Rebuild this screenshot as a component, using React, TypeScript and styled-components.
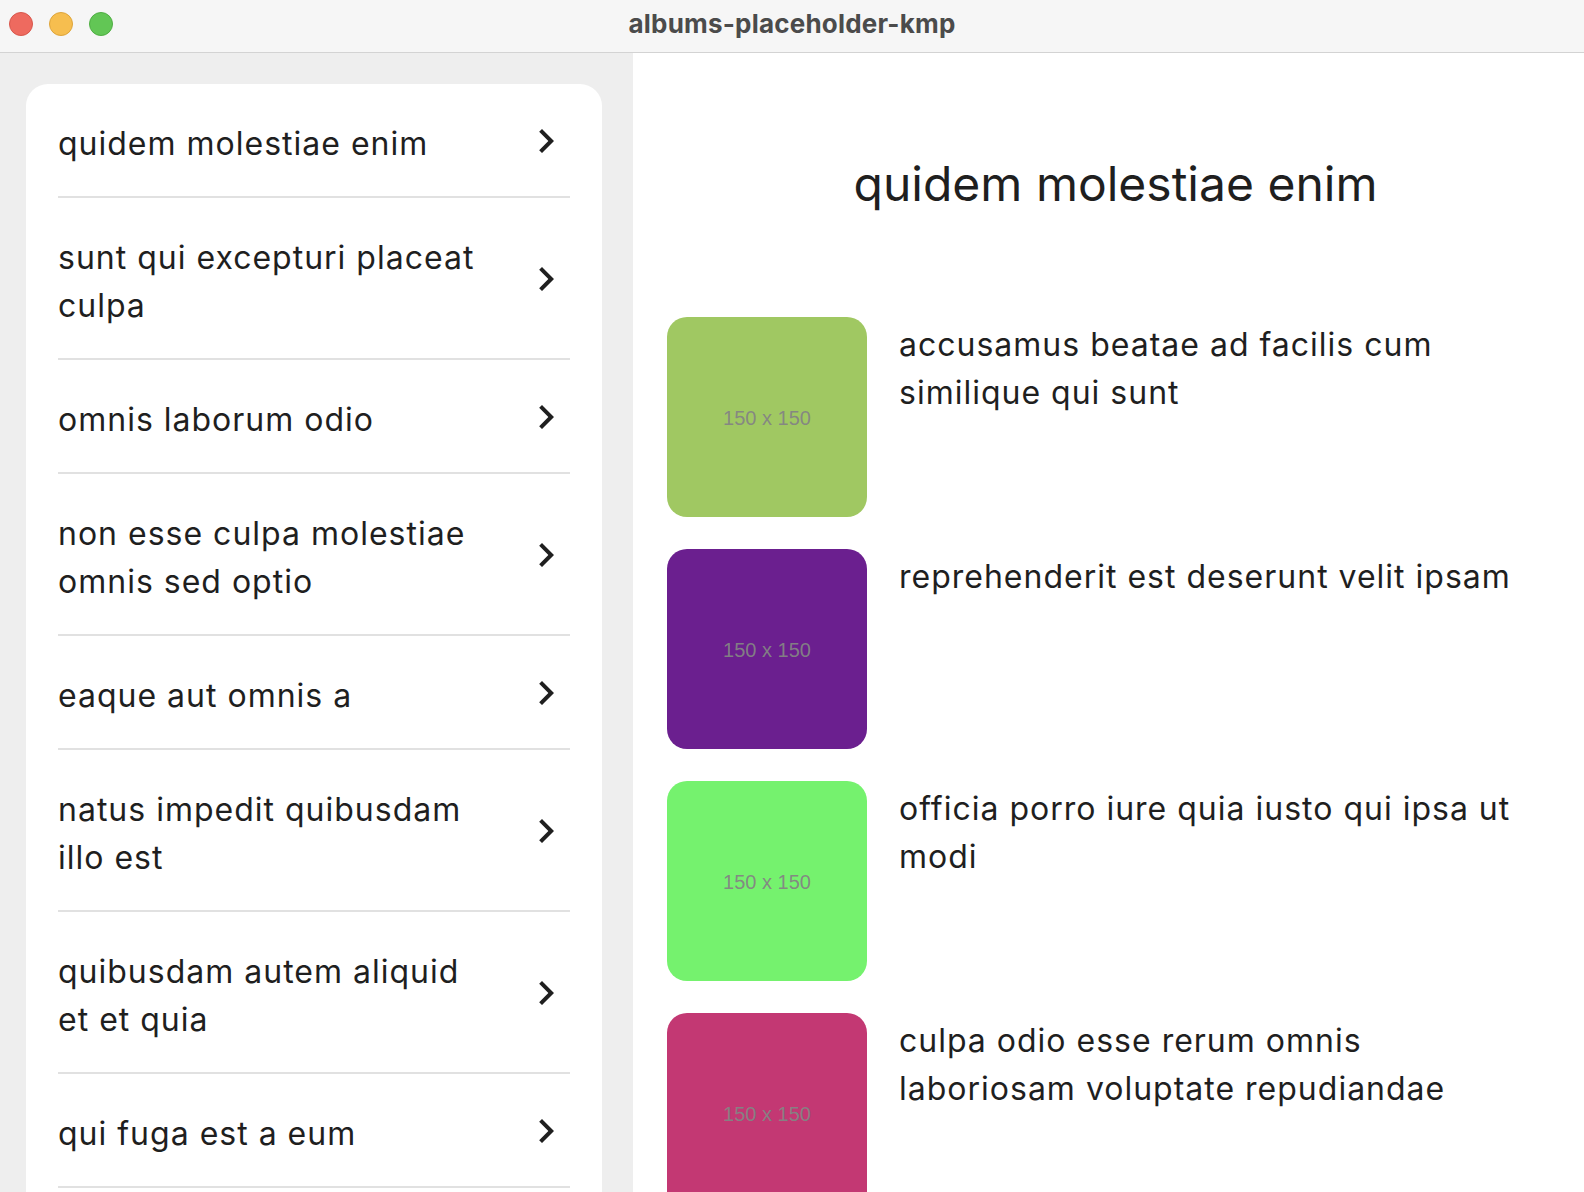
import styled, { createGlobalStyle } from 'styled-components';

const GlobalStyle = createGlobalStyle`
  html, body {
    margin: 0;
    padding: 0;
    height: 100%;
    overflow: hidden;
  }
  body {
    font-family: Inter, "Noto Sans", "DejaVu Sans", sans-serif;
    color: #1f1f1f;
  }
  #root {
    height: 100%;
  }
`;

const Window = styled.div`
  height: 100vh;
  display: flex;
  flex-direction: column;
  background: #ffffff;
`;

const TitleBar = styled.div`
  height: 53px;
  box-sizing: border-box;
  flex-shrink: 0;
  display: grid;
  grid-template-columns: 1fr auto 1fr;
  align-items: center;
  padding-bottom: 5px;
  background: #f6f6f6;
  border-bottom: 1px solid #d3d3d3;
`;

const Lights = styled.div`
  display: flex;
  gap: 16px;
  padding-left: 9px;
  padding-top: 1px;
`;

const Light = styled.span<{ $fill: string; $edge: string }>`
  width: 24px;
  height: 24px;
  border-radius: 50%;
  box-sizing: border-box;
  background: ${(p) => p.$fill};
  border: 1px solid ${(p) => p.$edge};
`;

const WindowTitle = styled.div`
  font-size: 26px;
  font-weight: 700;
  color: #4b4b4b;
  letter-spacing: 0.2px;
`;

const Body = styled.div`
  flex: 1;
  display: flex;
  min-height: 0;
`;

const Sidebar = styled.aside`
  width: 633px;
  flex-shrink: 0;
  box-sizing: border-box;
  background: #eeeeee;
  padding: 31px 31px 0 26px;
  overflow: hidden;
`;

const Card = styled.div`
  background: #ffffff;
  border-radius: 22px 22px 0 0;
  padding: 0 32px;
  min-height: 100%;
`;

const Item = styled.div`
  display: flex;
  align-items: center;
  padding: 36px 0 28px;
  border-bottom: 2px solid #e1e1e1;
`;

const ItemText = styled.div`
  flex: 1;
  padding-right: 32px;
  font-size: 32px;
  line-height: 48px;
  letter-spacing: 1px;
  color: #1f1f1f;
`;

const Chevron = styled.svg`
  width: 48px;
  height: 48px;
  flex-shrink: 0;
  margin-top: -6px;
  fill: #1f1f1f;
`;

const Main = styled.main`
  flex: 1;
  box-sizing: border-box;
  padding: 0 32px 0 34px;
  overflow: hidden;
`;

const Heading = styled.h1`
  margin: 99px 0 101px;
  padding-left: 12px;
  text-align: center;
  font-size: 48px;
  line-height: 64px;
  font-weight: 400;
  color: #1f1f1f;
`;

const AlbumRow = styled.div`
  display: flex;
  align-items: flex-start;
  gap: 32px;
  margin-bottom: 32px;
  padding-right: 24px;
`;

const Thumb = styled.div<{ $bg: string }>`
  width: 200px;
  height: 200px;
  flex-shrink: 0;
  border-radius: 20px;
  background: ${(p) => p.$bg};
  display: flex;
  align-items: center;
  justify-content: center;
  padding-top: 3px;
  box-sizing: border-box;
  font-family: "Liberation Sans", Arial, sans-serif;
  font-size: 20px;
  color: rgba(132, 132, 132, 0.95);
`;

const AlbumText = styled.div`
  flex: 1;
  padding-top: 4px;
  font-size: 32px;
  line-height: 48px;
  letter-spacing: 1px;
  color: #1f1f1f;
`;

const albums = [
  'quidem molestiae enim',
  'sunt qui excepturi placeat culpa',
  'omnis laborum odio',
  'non esse culpa molestiae omnis sed optio',
  'eaque aut omnis a',
  'natus impedit quibusdam illo est',
  'quibusdam autem aliquid et et quia',
  'qui fuga est a eum',
];

const photos = [
  { title: 'accusamus beatae ad facilis cum similique qui sunt', color: '#a0c862' },
  { title: 'reprehenderit est deserunt velit ipsam', color: '#6b1f8f' },
  { title: 'officia porro iure quia iusto qui ipsa ut modi', color: '#75f26e' },
  { title: 'culpa odio esse rerum omnis laboriosam voluptate repudiandae', color: '#c33873' },
];

function App() {
  return (
    <>
      <GlobalStyle />
      <Window>
        <TitleBar>
          <Lights>
            <Light $fill="#ee6a5f" $edge="#d8574c" />
            <Light $fill="#f6be4f" $edge="#dea53b" />
            <Light $fill="#62c655" $edge="#4fae43" />
          </Lights>
          <WindowTitle>albums-placeholder-kmp</WindowTitle>
          <div />
        </TitleBar>
        <Body>
          <Sidebar>
            <Card>
              {albums.map((a) => (
                <Item key={a}>
                  <ItemText>{a}</ItemText>
                  <Chevron viewBox="0 0 24 24">
                    <path d="M8.59 16.59L13.17 12 8.59 7.41 10 6l6 6-6 6-1.41-1.41z" />
                  </Chevron>
                </Item>
              ))}
            </Card>
          </Sidebar>
          <Main>
            <Heading>quidem molestiae enim</Heading>
            {photos.map((p) => (
              <AlbumRow key={p.title}>
                <Thumb $bg={p.color}>150 x 150</Thumb>
                <AlbumText>{p.title}</AlbumText>
              </AlbumRow>
            ))}
          </Main>
        </Body>
      </Window>
    </>
  );
}

export default App;
